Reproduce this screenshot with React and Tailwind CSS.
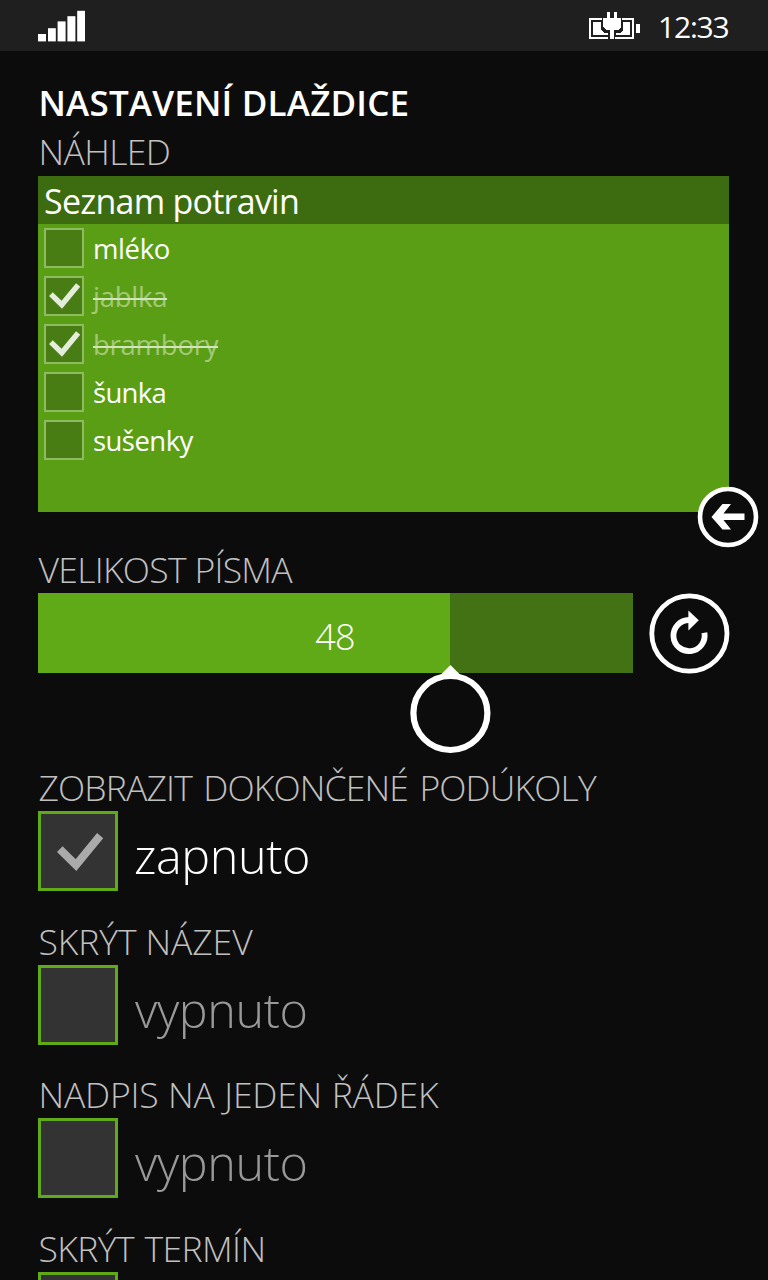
import React from 'react';

const light = "font-['Open_Sans','Noto_Sans',sans-serif] font-light";
const regular = "font-['Open_Sans','Noto_Sans',sans-serif] font-normal";

function SignalIcon() {
  return (
    <svg width="48" height="32" viewBox="0 0 48 32" fill="#fff">
      <rect x="0" y="24" width="8" height="7.4" />
      <rect x="10" y="18.2" width="7.8" height="13.2" />
      <rect x="19.6" y="11.4" width="8" height="20" />
      <rect x="29.4" y="6.2" width="8" height="25.2" />
      <rect x="39.2" y="0.8" width="7.8" height="30.6" />
    </svg>
  );
}

function BatteryIcon() {
  return (
    <svg width="52" height="28" viewBox="0 0 52 28" fill="#fff" shapeRendering="crispEdges">
      <path d="M0 6H13V8H2V25H19V27H0Z" />
      <path d="M33 6H45V27H26V25H43V8H33Z" />
      <path d="M47 12H51V21H47Z" />
      <path d="M4 10H12V18L15 21H19V23H4Z" />
      <path d="M41 10H34V18L31 21H27V23H41Z" />
      <path d="M14 6H18V0H21V6H25V0H28V6H32V15L29 18H25V27H21V18H17L14 15Z" />
    </svg>
  );
}

function Tick({ className }) {
  return (
    <svg className={className} viewBox="0 0 46 38" fill="none" stroke="currentColor" strokeWidth="8">
      <path d="M2.8 16.2L19 32L43.2 2.6" />
    </svg>
  );
}

function TileItem({ text, done, tracking }) {
  return (
    <li className="flex h-12 items-start">
      <span className="mt-[4px] flex h-10 w-10 items-center justify-center border-2 border-[#8fbc60] bg-[#477d12]">
        {done && <Tick className="h-[26px] w-[31px] text-[#e4ecda]" />}
      </span>
      <span
        className={`${regular} relative ml-[9px] text-[27.5px] leading-[50px] whitespace-nowrap ${tracking} ${
          done
            ? 'text-[#a3c978] after:absolute after:inset-x-0 after:top-[26px] after:h-[2px] after:bg-[#d3e5bf]'
            : 'text-white'
        }`}
      >
        {text}
      </span>
    </li>
  );
}

function Label({ children, className }) {
  return (
    <h2 className={`${light} ml-[0.5px] h-9 text-[35.5px] leading-9 whitespace-nowrap text-[#c0c0c0] ${className}`}>
      {children}
    </h2>
  );
}

function Option({ label, tracking, state }) {
  const on = state === 'zapnuto';
  return (
    <section className="h-[153.5px]">
      <Label className={tracking}>{label}</Label>
      <div className="mt-[6px] flex h-20">
        <span className="flex h-20 w-20 shrink-0 items-center justify-center border-[3.5px] border-[#60a917] bg-[#333]">
          {on && <Tick className="mt-[1px] ml-[3px] h-[38px] w-[46px] text-[#aaa]" />}
        </span>
        {state && (
          <span
            className={`${light} text-[48.5px] leading-[88px] tracking-[-0.4px] ${
              on ? 'ml-[16px] text-white' : 'ml-[17px] text-[#999]'
            }`}
          >
            {state}
          </span>
        )}
      </div>
    </section>
  );
}

export default function App() {
  return (
    <div className="h-[1280px] w-[768px] overflow-hidden bg-[#0c0c0c]">
      <header className="flex h-[51px] items-start bg-[#1f1f1f] pl-[38px]">
        <div className="pt-[10px]"><SignalIcon /></div>
        <div className="ml-[503px] pt-[12px]"><BatteryIcon /></div>
        <span className={`${regular} ml-[17px] text-[30px] leading-[54px] tracking-[-1.2px] text-white`}>12:33</span>
      </header>

      <main className="pl-[38px]">
        <h1 className="mt-[34px] ml-[0.5px] h-9 font-['Open_Sans','Noto_Sans',sans-serif] text-[35px] leading-9 font-semibold tracking-[0.2px] whitespace-nowrap text-white">
          NASTAVENÍ DLAŽDICE
        </h1>
        <Label className="mt-[12px] tracking-[-0.6px]">NÁHLED</Label>

        <div className="relative mt-[7px] h-[336px] w-[691px] bg-[#5a9e15]">
          <div className={`${regular} h-[47.5px] bg-[#3d6b0f] pl-[6px] text-[34px] leading-[51px] tracking-[-0.75px] text-white`}>
            Seznam potravin
          </div>
          <ul className="pl-[6px]">
            <TileItem text="mléko" tracking="tracking-[-0.4px]" />
            <TileItem text="jablka" tracking="tracking-[-0.25px]" done />
            <TileItem text="brambory" tracking="tracking-[-0.25px]" done />
            <TileItem text="šunka" tracking="tracking-[-0.7px]" />
            <TileItem text="sušenky" tracking="tracking-[-0.55px]" />
          </ul>
          <svg className="absolute top-[310px] left-[659px]" width="62" height="62" viewBox="0 0 62 62">
            <circle cx="31" cy="31" r="28" fill="#0c0c0c" stroke="#fff" strokeWidth="4.6" />
            <path d="M14.5 31L25.5 18H34L26.5 27.5H47.5V34H26.5L34 43.5H25.5Z" fill="#fff" />
          </svg>
        </div>

        <Label className="mt-[39px] tracking-[-0.7px]">VELIKOST PÍSMA</Label>
        <div className="mt-[6px] flex h-20">
          <div className="relative flex h-20 w-[595px] bg-[#427213]">
            <div className="h-20 w-[412px] bg-[#60a917]" />
            <span className={`${light} absolute inset-x-0 top-0 pr-[1px] text-center text-[36px] leading-[87px] tracking-[-0.7px] text-white`}>
              48
            </span>
            <svg className="absolute top-[71px] left-[371px]" width="83" height="90" viewBox="0 0 83 90">
              <path d="M41.4 1L52 11.5H31Z" fill="#fff" />
              <circle cx="41.4" cy="49" r="37" fill="#0c0c0c" stroke="#fff" strokeWidth="6.2" />
            </svg>
          </div>
          <svg className="ml-[15px]" width="82" height="81" viewBox="0 0 82 81">
            <circle cx="41.4" cy="40.5" r="37.6" fill="none" stroke="#fff" strokeWidth="4.8" />
            <path d="M41 27A15.6 15.6 0 1 0 56.4 39.8" fill="none" stroke="#fff" strokeWidth="5.8" />
            <path d="M40.4 17.4V37.4L50.8 27.2Z" fill="#fff" />
          </svg>
        </div>

        <div className="mt-[96px]">
          <Option label="ZOBRAZIT DOKONČENÉ PODÚKOLY" tracking="tracking-[-0.85px] [word-spacing:3px]" state="zapnuto" />
          <Option label="SKRÝT NÁZEV" tracking="tracking-[-0.1px]" state="vypnuto" />
          <Option label="NADPIS NA JEDEN ŘÁDEK" tracking="tracking-[-0.2px] [word-spacing:0.7px]" state="vypnuto" />
          <Option label="SKRÝT TERMÍN" tracking="tracking-[-0.6px] [word-spacing:2px]" />
        </div>
      </main>
    </div>
  );
}
